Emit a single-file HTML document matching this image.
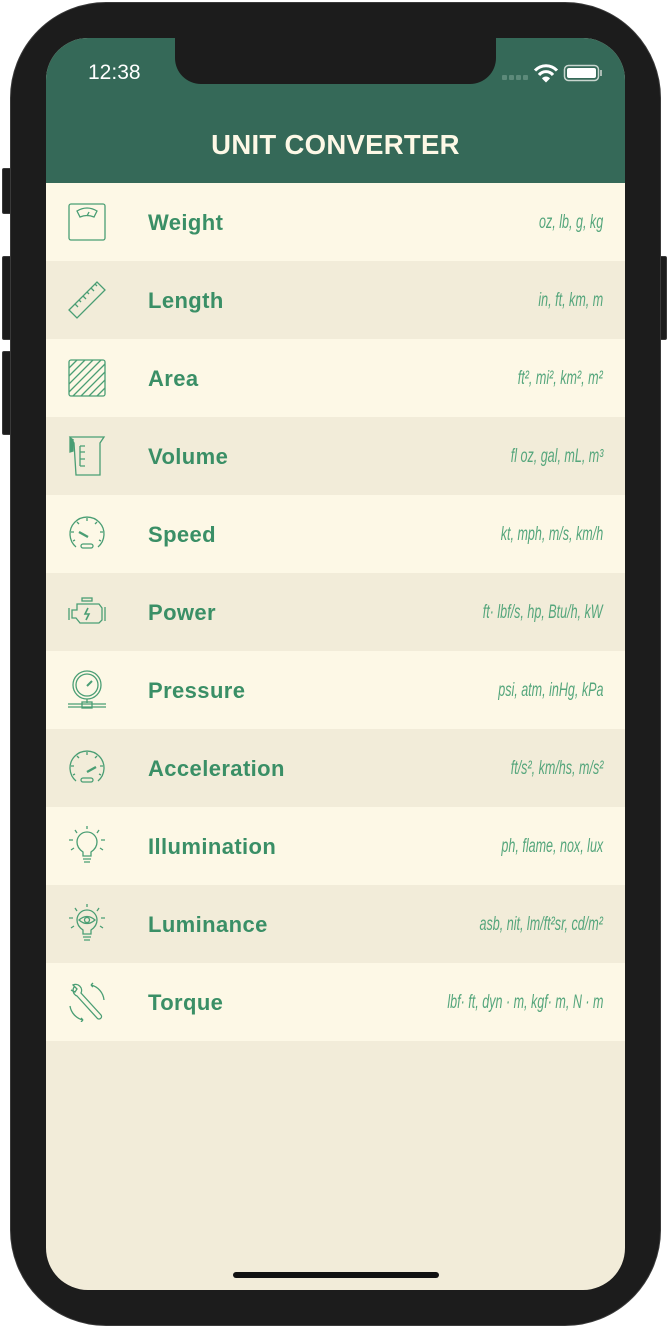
<!DOCTYPE html>
<html><head><meta charset="utf-8"><style>
*{margin:0;padding:0;box-sizing:border-box}
html,body{width:669px;height:1328px;background:#fff;overflow:hidden;font-family:"Liberation Sans",sans-serif}
.phone{position:absolute;left:10px;top:2px;width:651px;height:1324px;background:#1c1c1c;border-radius:96px;border:1px solid #3a3a3a}
.btn{position:absolute;background:#1c1c1c;border:1px solid #3a3a3a;border-radius:2px}
.screen{position:absolute;left:46px;top:38px;width:579px;height:1252px;background:#f2ecd9;border-radius:42px;overflow:hidden}
.header{position:absolute;left:0;top:0;width:579px;height:145px;background:#356958}
.notch{position:absolute;left:129px;top:0;width:321px;height:46px;background:#1c1c1c;border-radius:0 0 26px 26px}
.time{position:absolute;left:42px;top:23px;color:#fff;font-size:21px;font-weight:500}
.title{position:absolute;left:0;width:579px;top:91px;text-align:center;color:#fdf8e6;font-weight:bold;font-size:27.5px;letter-spacing:0.3px}
.row{position:absolute;left:0;width:579px;height:78px}
.row .ic{position:absolute;left:21px;top:19px;width:40px;height:40px}
.row .nm{position:absolute;left:102px;top:27px;color:#3a8f66;font-weight:bold;font-size:22px;letter-spacing:0.4px}
.row .u{position:absolute;right:22px;top:29px;color:#55a67c;font-style:italic;font-size:19px;font-family:"Liberation Sans Narrow","Liberation Sans",sans-serif;transform-origin:right;transform:scaleX(0.66);white-space:nowrap}
.home{position:absolute;left:187px;top:1234px;width:206px;height:6px;background:#111;border-radius:3px}
svg{fill:none;stroke:#4a9e74;stroke-width:1.3}
</style></head><body>
<div class="btn" style="left:2px;top:168px;width:10px;height:46px"></div>
<div class="btn" style="left:2px;top:256px;width:10px;height:84px"></div>
<div class="btn" style="left:2px;top:351px;width:10px;height:84px"></div>
<div class="btn" style="left:658px;top:256px;width:9px;height:84px"></div>
<div class="phone"></div>
<div class="screen">
<div class="header">
<div class="notch"></div>
<div class="time">12:38</div>
<svg style="position:absolute;left:454px;top:24px" width="104" height="24" viewBox="0 0 104 24">
<g fill="#5d8a7a" stroke="none"><rect x="2" y="13" width="5" height="5" rx="1"/><rect x="9" y="13" width="5" height="5" rx="1"/><rect x="16" y="13" width="5" height="5" rx="1"/><rect x="23" y="13" width="5" height="5" rx="1"/></g>
<g stroke="#fff" stroke-width="3"><path d="M35 8.5a15 15 0 0 1 22 0"/><path d="M39 13a9 9 0 0 1 14 0"/></g><path d="M42 16.5l4 4 4-4a5 5 0 0 0-8 0z" fill="#fff" stroke="none"/>
<rect x="64.5" y="3.5" width="34" height="15" rx="4" stroke="#c9d6cf" stroke-width="1.5"/><rect x="67" y="6" width="29" height="10" rx="2" fill="#fff" stroke="none"/><rect x="100" y="8" width="2" height="6" fill="#aabbb3" stroke="none"/>
</svg>
<div class="title">UNIT CONVERTER</div>
</div>

<div class="row" style="top:145px;background:#fdf8e6"><svg class="ic" viewBox="0 0 40 40"><rect x="2" y="2" width="36" height="36" rx="2"/><path d="M10 9q10-6 20 0l-3 6q-7-3-14 0z"/><path d="M20 14l2-4"/></svg><div class="nm">Weight</div><div class="u">oz, lb, g, kg</div></div>
<div class="row" style="top:223px;background:#f2ecd9"><svg class="ic" viewBox="0 0 40 40"><path d="M2 30L30 2l8 8L10 38z"/><path d="M8 24l3 3M12 20l2 2M16 16l3 3M20 12l2 2M24 8l3 3M28 4l2 2"/></svg><div class="nm">Length</div><div class="u">in, ft, km, m</div></div>
<div class="row" style="top:301px;background:#fdf8e6"><svg class="ic" viewBox="0 0 40 40"><rect x="2" y="2" width="36" height="36" rx="2"/><path d="M2 10L10 2M2 18L18 2M2 26L26 2M2 34L34 2M6 38L38 6M14 38L38 14M22 38L38 22M30 38L38 30"/></svg><div class="nm">Area</div><div class="u">ft², mi², km², m²</div></div>
<div class="row" style="top:379px;background:#f2ecd9"><svg class="ic" viewBox="0 0 40 40"><path d="M3 1h34l-4 6v32H9L7 7z"/><path d="M3 1v15l3-1V3" fill="#4a9e74"/><path d="M13 10h5M13 10v20M13 16h5M13 23h5M13 30h5"/></svg><div class="nm">Volume</div><div class="u">fl oz, gal, mL, m³</div></div>
<div class="row" style="top:457px;background:#fdf8e6"><svg class="ic" viewBox="0 0 40 40"><path d="M9 33A17 17 0 1 1 31 33"/><rect x="14" y="30" width="12" height="4" rx="2"/><path d="M12 18l9 5" stroke-width="2.4"/><path d="M20 4v3M10 8l2 2M30 8l-2 2M4 18h3M33 18h3M6 27l2-1M34 27l-2-1"/></svg><div class="nm">Speed</div><div class="u">kt, mph, m/s, km/h</div></div>
<div class="row" style="top:535px;background:#f2ecd9"><svg class="ic" viewBox="0 0 40 40"><rect x="15" y="6" width="10" height="3"/><path d="M10 12h22l3 4v12l-3 3H13l-4-5H5V18h5z"/><path d="M2 16v12M38 15v14"/><path d="M21 16l-3 6h4l-3 6" stroke-width="1.6"/></svg><div class="nm">Power</div><div class="u">ft· lbf/s, hp, Btu/h, kW</div></div>
<div class="row" style="top:613px;background:#fdf8e6"><svg class="ic" viewBox="0 0 40 40"><circle cx="20" cy="15" r="14"/><circle cx="20" cy="15" r="11"/><path d="M20 16l5-5" stroke-width="2"/><path d="M20 29v4M1 34h38M1 37h38"/><rect x="15" y="32" width="10" height="6"/></svg><div class="nm">Pressure</div><div class="u">psi, atm, inHg, kPa</div></div>
<div class="row" style="top:691px;background:#f2ecd9"><svg class="ic" viewBox="0 0 40 40"><path d="M9 33A17 17 0 1 1 31 33"/><rect x="14" y="30" width="12" height="4" rx="2"/><path d="M20 24l9-5" stroke-width="2.4"/><path d="M20 4v3M10 8l2 2M30 8l-2 2M4 18h3M33 18h3M6 27l2-1M34 27l-2-1"/></svg><div class="nm">Acceleration</div><div class="u">ft/s², km/hs, m/s²</div></div>
<div class="row" style="top:769px;background:#fdf8e6"><svg class="ic" viewBox="0 0 40 40"><path d="M16 30v-4q-6-4-6-10a10 10 0 0 1 20 0q0 6-6 10v4z"/><path d="M16 33h8M17 36h6M20 0v3M8 4l2 3M32 4l-2 3M2 14h4M34 14h4M4 24l3-2M36 24l-3-2"/></svg><div class="nm">Illumination</div><div class="u">ph, flame, nox, lux</div></div>
<div class="row" style="top:847px;background:#f2ecd9"><svg class="ic" viewBox="0 0 40 40"><path d="M16 30v-4q-6-4-6-10a10 10 0 0 1 20 0q0 6-6 10v4z"/><path d="M12 16q8-7 16 0q-8 7-16 0z"/><circle cx="20" cy="16" r="2.5"/><path d="M16 33h8M17 36h6M20 0v3M8 4l2 3M32 4l-2 3M2 14h4M34 14h4M4 24l3-2M36 24l-3-2"/></svg><div class="nm">Luminance</div><div class="u">asb, nit, lm/ft²sr, cd/m²</div></div>
<div class="row" style="top:925px;background:#fdf8e6"><svg class="ic" viewBox="0 0 40 40"><path d="M8 4a6 6 0 0 0 2 10l20 22a2.5 2.5 0 0 0 4-3L14 11a6 6 0 0 0-8-8l4 4-2 3-4-2"/><path d="M24 3a17 17 0 0 1 13 15M16 38A17 17 0 0 1 3 24"/><path d="M24 3l2-2M24 3l2 2M16 38l-2-2M16 38l-2 2"/></svg><div class="nm">Torque</div><div class="u">lbf· ft, dyn · m, kgf· m, N · m</div></div>

<div class="home"></div>
</div>
</body></html>
